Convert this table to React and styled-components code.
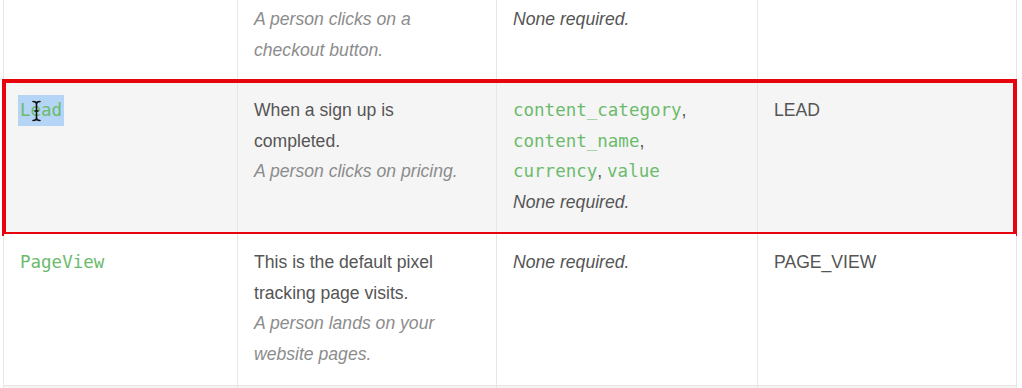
import React from "react";
import styled, { createGlobalStyle } from "styled-components";

const GlobalStyle = createGlobalStyle`
  html, body {
    margin: 0;
    padding: 0;
    background: #ffffff;
    overflow: hidden;
  }
  body {
    font-family: "Liberation Sans", Arial, sans-serif;
  }
`;

const Page = styled.div`
  width: 1022px;
  height: 388px;
  overflow: hidden;
`;

const Table = styled.div`
  margin: -9px 0 0 3px;
  width: 1012px;
  border-left: 1px solid #e6e6e6;
  border-right: 1px solid #e6e6e6;
`;

const Row = styled.div`
  position: relative;
  display: grid;
  grid-template-columns: 233px 259px 261px 1fr;
  background: ${(p) => (p.$shaded ? "#f5f5f5" : "#ffffff")};
  border-bottom: 1px solid #e6e6e6;

  ${(p) =>
    p.$marked &&
    `
    &::after {
      content: "";
      position: absolute;
      top: -3px;
      bottom: -3px;
      left: -2px;
      right: -1px;
      border: 4px solid #e8040c;
      pointer-events: none;
    }
  `}
`;

const Cell = styled.div`
  padding: 13px 20px 16px 16px;
  border-left: 1px solid #e6e6e6;
  font-size: 17.6px;
  line-height: 30.5px;
  color: #555555;

  &:first-child {
    border-left: none;
  }
`;

const Code = styled.code`
  font-family: "DejaVu Sans Mono", "Liberation Mono", monospace;
  font-size: 17.5px;
  line-height: 1;
  color: #6cbb6c;
`;

const Example = styled.div`
  font-style: italic;
  color: #8c8c8c;
`;

const NoneRequired = styled.div`
  font-style: italic;
  color: #555555;
`;

const Selected = styled.span`
  position: relative;
  display: inline-block;
  margin-left: -2px;
  padding: 0 2px;
  background: #b5d5f7;
`;

const Caret = styled.svg`
  position: absolute;
  left: 14px;
  top: 5px;
  width: 9px;
  height: 22px;
`;

const IBeam = () => (
  <Caret viewBox="0 0 9 22">
    <path
      d="M1 1.5 Q4.5 1.5 4.5 4 Q4.5 1.5 8 1.5 M4.5 4 V18 M1 20.5 Q4.5 20.5 4.5 18 Q4.5 20.5 8 20.5 M3 11 H6"
      fill="none"
      stroke="#111"
      strokeWidth="1.6"
      strokeLinecap="round"
    />
  </Caret>
);

const App = () => {
  return (
    <Page>
      <GlobalStyle />
      <Table>
        <Row>
          <Cell />
          <Cell>
            <Example>A person clicks on a checkout button.</Example>
          </Cell>
          <Cell>
            <NoneRequired>None required.</NoneRequired>
          </Cell>
          <Cell />
        </Row>

        <Row $shaded $marked>
          <Cell>
            <Selected>
              <Code>Lead</Code>
              <IBeam />
            </Selected>
          </Cell>
          <Cell>
            When a sign up is completed.
            <Example>A person clicks on pricing.</Example>
          </Cell>
          <Cell>
            <Code>content_category</Code>,
            <br />
            <Code>content_name</Code>,
            <br />
            <Code>currency</Code>, <Code>value</Code>
            <NoneRequired>None required.</NoneRequired>
          </Cell>
          <Cell>LEAD</Cell>
        </Row>

        <Row>
          <Cell>
            <Code>PageView</Code>
          </Cell>
          <Cell>
            This is the default pixel tracking page visits.
            <Example>A person lands on your website pages.</Example>
          </Cell>
          <Cell>
            <NoneRequired>None required.</NoneRequired>
          </Cell>
          <Cell>PAGE_VIEW</Cell>
        </Row>

        <Row $shaded>
          <Cell />
          <Cell />
          <Cell />
          <Cell />
        </Row>
      </Table>
    </Page>
  );
};

export default App;
